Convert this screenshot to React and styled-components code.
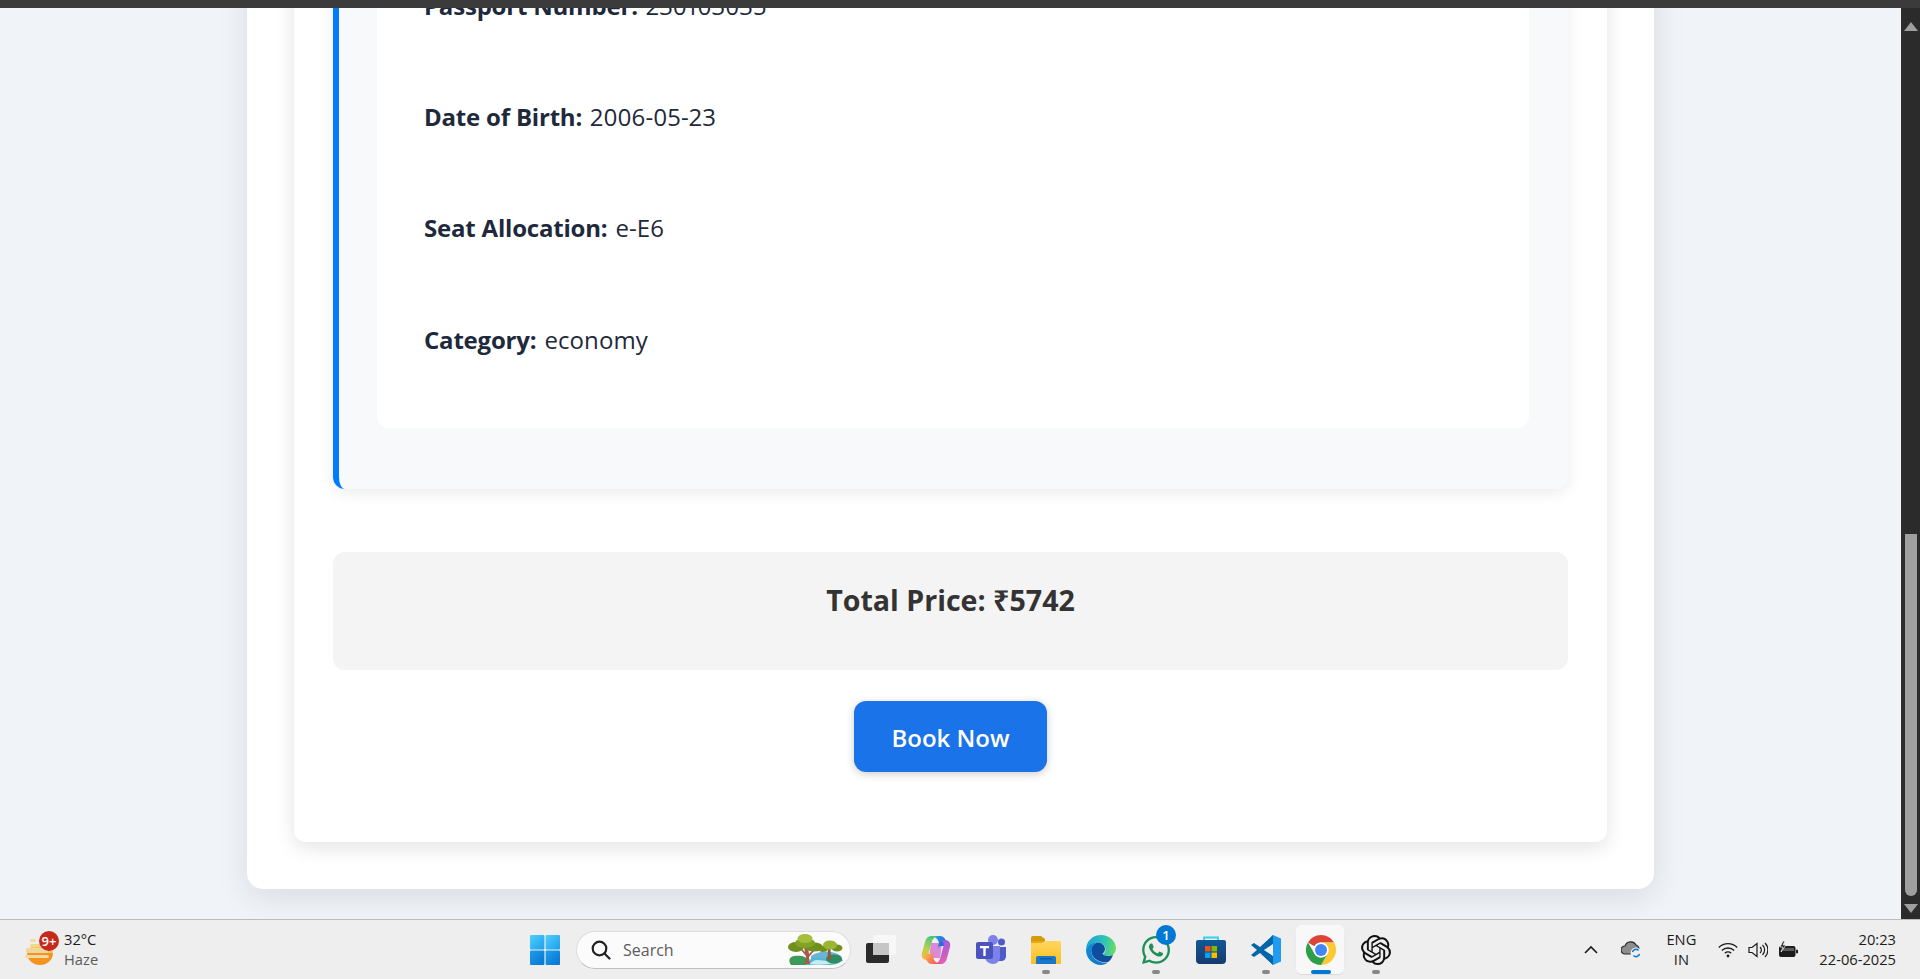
import React from "react";
import styled, { createGlobalStyle } from "styled-components";
import { SiOpenai } from "react-icons/si";
import { FaWhatsapp } from "react-icons/fa";

const GlobalStyle = createGlobalStyle`
  html, body {
    margin: 0;
    padding: 0;
    overflow: hidden;
    font-family: "Open Sans", "Noto Sans", sans-serif;
  }
`;

const Screen = styled.div`
  width: 1920px;
  height: 979px;
  display: grid;
  grid-template-rows: 8px 911px 60px;
  background: #f0f4f8;
`;

const TopStrip = styled.div`
  background: #3b3b3b;
`;

const Middle = styled.div`
  display: grid;
  grid-template-columns: 1fr 19px;
  min-height: 0;
`;

/* scrolled to the bottom, so content hangs from the bottom edge */
const Viewport = styled.main`
  display: flex;
  flex-direction: column;
  justify-content: flex-end;
  align-items: center;
  overflow: hidden;
  padding-bottom: 30px;
`;

const OuterCard = styled.div`
  width: 1407px;
  box-sizing: border-box;
  flex-shrink: 0;
  background: #fff;
  border-radius: 16px;
  padding: 0 47px 47px;
  box-shadow: 0 8px 32px rgba(0, 0, 0, 0.1);
`;

const BookingCard = styled.div`
  background: #fff;
  border-radius: 12px;
  padding: 0 39px 70px;
  box-shadow: 0 6px 20px rgba(0, 0, 0, 0.11);
`;

const PassengerCard = styled.section`
  background: #f8f9fb;
  border-left: 6px solid #007bff;
  border-radius: 12px;
  padding: 0 39px 61px 38px;
  box-shadow: 0 4px 15px rgba(0, 0, 0, 0.08);
`;

const Details = styled.div`
  background: #fff;
  border-radius: 12px;
  padding: 0 47px 34px;
`;

const Row = styled.p`
  margin: 0;
  height: 111px;
  padding-top: 1px;
  display: flex;
  align-items: center;
  gap: 8px;
  font-size: 24px;
  letter-spacing: 0.1px;
  font-variant-numeric: proportional-nums;
  color: #1e293b;
  border-bottom: 1px solid #fefefe;
  box-sizing: border-box;
  &:last-child {
    border-bottom: 0;
  }
  strong {
    font-weight: 700;
    letter-spacing: -0.2px;
  }
`;

const TotalBox = styled.div`
  margin-top: 63px;
  height: 118px;
  box-sizing: border-box;
  padding-top: 28px;
  background: #f4f4f4;
  border-radius: 12px;
  text-align: center;
  font-size: 28.6px;
  line-height: 40px;
  font-weight: 700;
  color: #333;
`;

const BookRow = styled.div`
  display: flex;
  justify-content: center;
  margin-top: 31px;
`;

const BookButton = styled.button`
  width: 193px;
  height: 71px;
  padding: 2px 0 0;
  border: 0;
  border-radius: 12px;
  background: #1a73e8;
  color: #fff;
  font-family: inherit;
  font-size: 24px;
  font-weight: 600;
  box-shadow: 0 2px 8px rgba(0, 0, 0, 0.2);
`;

const ScrollTrack = styled.div`
  background: #2b2b2b;
  display: flex;
  flex-direction: column;
  align-items: center;
  justify-content: space-between;
  padding: 14px 0 6px;
`;

const Arrow = styled.div`
  width: 0;
  height: 0;
  border-left: 7px solid transparent;
  border-right: 7px solid transparent;
  ${(p) => (p.$down ? "border-top: 9px solid #9f9f9f;" : "border-bottom: 9px solid #9f9f9f;")}
`;

const Thumb = styled.div`
  width: 12px;
  height: 362px;
  margin-top: auto;
  margin-bottom: 8px;
  border-radius: 0 0 6px 6px;
  background: #9f9f9f;
`;

const Taskbar = styled.footer`
  display: grid;
  grid-template-columns: 517px 887px 1fr;
  align-items: center;
  background: #eeeeee;
  border-top: 1px solid #bcbcbc;
  box-sizing: border-box;
`;

const Weather = styled.div`
  display: flex;
  align-items: center;
  gap: 9px;
  padding-left: 25px;
`;

const WeatherIcon = styled.div`
  position: relative;
  width: 30px;
  height: 32px;
`;

const CountBadge = styled.span`
  position: absolute;
  display: flex;
  align-items: center;
  justify-content: center;
  border-radius: 50%;
  color: #fff;
  background: ${(p) => p.$bg};
  width: ${(p) => p.$size}px;
  height: ${(p) => p.$size}px;
  top: ${(p) => p.$top}px;
  right: ${(p) => p.$right}px;
  font-size: 13px;
  font-weight: 600;
`;

const TwoLines = styled.div`
  display: flex;
  flex-direction: column;
  gap: 3px;
  font-size: 14.7px;
  line-height: 17px;
  color: #1c1c1c;
`;

const Muted = styled.span`
  color: #5c5c5c;
`;

const Center = styled.div`
  display: flex;
  align-items: center;
`;

const Slot = styled.div`
  position: relative;
  width: 55px;
  height: 59px;
  display: flex;
  align-items: center;
  justify-content: center;
  flex-shrink: 0;
  &::before {
    content: "";
    display: ${(p) => (p.$active ? "block" : "none")};
    position: absolute;
    left: 3px;
    right: 4px;
    top: 5px;
    bottom: 5px;
    background: #f8f8f8;
    border-radius: 5px;
    box-shadow: 0 1px 1px rgba(0, 0, 0, 0.08);
  }
  svg {
    position: relative;
  }
`;

const Running = styled.span`
  position: absolute;
  left: 50%;
  bottom: 5px;
  transform: translateX(-50%);
  height: 4px;
  border-radius: 2px;
  width: ${(p) => (p.$active ? 20 : 8)}px;
  background: ${(p) => (p.$active ? "#0078d4" : "#888")};
`;

const SearchBox = styled.div`
  width: 275px;
  height: 38px;
  margin: 0 2px 0 4px;
  box-sizing: border-box;
  padding: 0 7px 0 14px;
  flex-shrink: 0;
  display: flex;
  align-items: center;
  gap: 12px;
  background: #fbfbfb;
  border: 1px solid #dcdcdc;
  border-bottom-color: #bfbfbf;
  border-radius: 19px;
  font-size: 16px;
  color: #5c5c5c;
`;

const SearchLabel = styled.span`
  flex: 1;
`;

const Tray = styled.div`
  display: flex;
  align-items: center;
  justify-content: flex-end;
  padding-right: 24px;
`;

const TrayIcon = styled.div`
  display: flex;
  margin-left: ${(p) => p.$gap || 0}px;
`;

const Lang = styled(TwoLines)`
  margin-left: 24px;
  text-align: center;
`;

const Clock = styled(TwoLines)`
  margin-left: 21px;
  text-align: right;
`;

const WeatherGlyph = () => (
  <svg width="30" height="32" viewBox="0 0 30 32">
    <path d="M2 19h26a13 12 0 0 1-26 0z" fill="#f5931e" />
    <path d="M6 13h20a12 12 0 0 1 2 6H3a12 12 0 0 1 3-6z" fill="#f9c468" />
    <rect x="5" y="5" width="6" height="3" rx="1.5" fill="#f5dc94" />
    <rect x="5" y="10" width="16" height="3" rx="1.5" fill="#f3d78d" />
    <rect x="1" y="14" width="22" height="5" rx="2" fill="#eed79b" />
    <rect x="0" y="21" width="24" height="3" rx="1.5" fill="#efd9a4" />
  </svg>
);

const WindowsLogo = () => (
  <svg width="30" height="30" viewBox="0 0 30 30">
    <defs>
      <linearGradient id="winA" x1="0" y1="0" x2="1" y2="1">
        <stop offset="0" stopColor="#4fd0fb" />
        <stop offset="1" stopColor="#1e9eec" />
      </linearGradient>
      <linearGradient id="winB" x1="0" y1="0" x2="1" y2="1">
        <stop offset="0" stopColor="#1d9fec" />
        <stop offset="1" stopColor="#0674d2" />
      </linearGradient>
    </defs>
    <rect x="0" y="0" width="14.4" height="14.4" rx="1" fill="url(#winA)" />
    <rect x="15.6" y="0" width="14.4" height="14.4" rx="1" fill="url(#winA)" />
    <rect x="0" y="15.6" width="14.4" height="14.4" rx="1" fill="url(#winB)" />
    <rect x="15.6" y="15.6" width="14.4" height="14.4" rx="1" fill="url(#winB)" />
  </svg>
);

const SearchGlyph = () => (
  <svg width="20" height="20" viewBox="0 0 20 20" fill="none" stroke="#222" strokeWidth="2.2" strokeLinecap="round">
    <circle cx="8.5" cy="8.5" r="6.8" />
    <path d="M13.5 13.5 18.5 18.5" />
  </svg>
);

const Trees = () => (
  <svg width="56" height="32" viewBox="0 0 56 32">
    <path d="M24 22c8-6 22-6 30 0l2 5-8 3H24z" fill="#6bb4d8" />
    <path d="M4 31c-3-4-2-8 3-9 6-1 12 0 14 4 1 2 0 4-2 5z" fill="#3f9a5a" />
    <path d="M18 31c6-2 3-6 8-7 8-1 20 1 27 3-2 3-6 4-12 4z" fill="#55b6cf" />
    <path d="M22 30c4-2 3-3 7-4 6 0 12 1 17 3-6 2-16 2-24 1z" fill="#c6eef2" />
    <ellipse cx="47" cy="25" rx="8" ry="4.500" fill="#2f8d62" />
    <path d="M17 13h4l1 7 4-4 1 1-5 6 1 7h-5l1-8-5-6 1-1 3 3z" fill="#a85b45" />
    <path d="M41 15h2.500l.5 11h-3.500z" fill="#8f5a40" />
    <ellipse cx="9" cy="13" rx="8" ry="5" fill="#6f8f1e" />
    <ellipse cx="27" cy="13" rx="9" ry="4.500" fill="#6f8f1e" />
    <ellipse cx="18" cy="9" rx="10" ry="5" fill="#84a326" />
    <ellipse cx="18" cy="4.500" rx="7.500" ry="4.500" fill="#a6bf3a" />
    <ellipse cx="36" cy="15" rx="5" ry="3" fill="#6f8f1e" />
    <ellipse cx="50" cy="14" rx="5.500" ry="3.500" fill="#6f8f1e" />
    <ellipse cx="43" cy="11" rx="7" ry="4.500" fill="#9ab733" />
  </svg>
);

const TaskView = () => (
  <svg width="30" height="30" viewBox="0 0 30 30">
    <rect x="7" y="0" width="23" height="20" rx="2" fill="#f7f7f7" />
    <rect x="0" y="8" width="23" height="20" rx="2" fill="#2b2b2b" />
    <rect x="7" y="8" width="16" height="12" fill="#c6c6c6" />
  </svg>
);

const Copilot = () => (
  <svg width="30" height="30" viewBox="0 0 30 30">
    <defs>
      <linearGradient id="copA" x1="0" y1="0" x2="1" y2="0.6">
        <stop offset="0" stopColor="#27b4e8" />
        <stop offset="1" stopColor="#2a55d8" />
      </linearGradient>
      <linearGradient id="copB" x1="0.7" y1="0" x2="0.3" y2="1">
        <stop offset="0" stopColor="#3cc28a" />
        <stop offset="0.6" stopColor="#b8d24a" />
        <stop offset="1" stopColor="#f8b63a" />
      </linearGradient>
      <linearGradient id="copC" x1="0.3" y1="0" x2="0.7" y2="1">
        <stop offset="0" stopColor="#8a5fe8" />
        <stop offset="1" stopColor="#ef5fa8" />
      </linearGradient>
      <linearGradient id="copD" x1="0" y1="0.4" x2="1" y2="1">
        <stop offset="0" stopColor="#fbb04a" />
        <stop offset="1" stopColor="#ee4062" />
      </linearGradient>
    </defs>
    <path d="M10 8h11l-2 15H8z" fill="#d98ad8" />
    <path d="M10 1h9c3 0 5 2 6 5l1.500 5H20c-2 0-3 1-3.500 3L18 8c-1-4-3-6-8-7z" fill="url(#copA)" />
    <path d="M10 1h7c-4 1-5.500 3-6.500 7l-3 11c-.5 3 .5 5 2.500 6H6c-4 0-6-3-5-7L4 7c1-4 3-6 6-6z" fill="url(#copB)" />
    <path d="M20 29h-7c4-1 5.500-3 6.500-7l3-11c.5-3-.5-5-2.500-6h4c4 0 6 3 5 7l-3 11c-1 4-3 6-6 6z" fill="url(#copC)" />
    <path d="M20 29h-9c-3 0-5-2-6-5l-1.500-5H10c2 0 3-1 3.500-3L12 22c1 4 3 6 8 7z" fill="url(#copD)" />
  </svg>
);

const Teams = () => (
  <svg width="30" height="30" viewBox="0 0 30 30">
    <circle cx="17" cy="5" r="5" fill="#7b83eb" />
    <circle cx="25.500" cy="7" r="3.500" fill="#5059c9" />
    <path d="M21 12h9v9c0 3-2 5-5 5h-3z" fill="#5059c9" />
    <path d="M9 11h15v11c0 4-3 7-7 7s-8-3-8-7z" fill="#7b83eb" />
    <rect x="0" y="7" width="17" height="17" rx="2" fill="#4b53bc" />
    <path d="M4 11h9v2.200h-3.300V21H7.300v-7.800H4z" fill="#fff" />
  </svg>
);

const Folder = () => (
  <svg width="30" height="28" viewBox="0 0 30 28">
    <defs>
      <linearGradient id="fold" x1="0" y1="0" x2="0" y2="1">
        <stop offset="0" stopColor="#ffd75e" />
        <stop offset="1" stopColor="#fbbf22" />
      </linearGradient>
    </defs>
    <path d="M0 2a2 2 0 0 1 2-2h8l4 3h0v24H0z" fill="#d39b0e" />
    <path d="M0 5h30v23H0z" fill="url(#fold)" />
    <path d="M0 5h14l-3 2H0z" fill="#e9aa10" />
    <path d="M5 28v-6a2 2 0 0 1 2-2h16a2 2 0 0 1 2 2v6z" fill="#1a78c8" />
    <rect x="9" y="22" width="12" height="1.500" fill="#0f5fa8" />
  </svg>
);

const Edge = () => (
  <svg width="30" height="30" viewBox="0 0 30 30">
    <defs>
      <linearGradient id="edgeA" x1="0" y1="0.5" x2="1" y2="0.6">
        <stop offset="0" stopColor="#1ba3dc" />
        <stop offset="0.6" stopColor="#2fc4b2" />
        <stop offset="1" stopColor="#6fdc62" />
      </linearGradient>
      <linearGradient id="edgeB" x1="0" y1="0" x2="1" y2="1">
        <stop offset="0" stopColor="#0f8fd8" />
        <stop offset="1" stopColor="#1273c4" />
      </linearGradient>
    </defs>
    <path d="M0 15C0 6 7 0 15 0c9 0 15 6.500 15 13.500 0 4.500-3.500 7.500-8 7.500-3 0-5-1-5-2 1.500-1 2.500-2.500 2.500-4.500C19.500 10 15.500 7 11.500 7.500 5.500 8 1 11 0 15z" fill="url(#edgeA)" />
    <path d="M0 15C1 10.500 6 7.500 11 7.500c-4 1.500-6.500 5.500-5.500 10.500 1 6 8 11 16.500 9.500-2 1.500-4.500 2.500-7 2.500C6.500 30 0 23 0 15z" fill="url(#edgeB)" />
    <path d="M11 7.500c4-.5 8 2.500 8 6.500 0 2-1 3.500-2.500 4.500 0 1.500 2.500 2.500 5.500 2.500 2 0 3.500-.5 5-1.500-1 3.500-2.500 6-5 7.500-8.500 1.500-15.500-3.500-16.500-9.500C4.500 13 7 9 11 7.500z" fill="#0b4f9e" />
  </svg>
);

const Store = () => (
  <svg width="30" height="30" viewBox="0 0 30 30">
    <defs>
      <linearGradient id="storeBg" x1="0" y1="0" x2="0" y2="1">
        <stop offset="0" stopColor="#0f5a96" />
        <stop offset="1" stopColor="#173a6e" />
      </linearGradient>
    </defs>
    <path d="M8 6V2.500h14V6" fill="none" stroke="#31d0f2" strokeWidth="1.800" />
    <path d="M0 7a2 2 0 0 1 2-2h26a2 2 0 0 1 2 2v18a4 4 0 0 1-4 4H4a4 4 0 0 1-4-4z" fill="url(#storeBg)" />
    <rect x="9" y="11" width="5.500" height="5.500" fill="#f25022" />
    <rect x="15.500" y="11" width="5.500" height="5.500" fill="#7fba00" />
    <rect x="9" y="17.500" width="5.500" height="5.500" fill="#00a4ef" />
    <rect x="15.500" y="17.500" width="5.500" height="5.500" fill="#ffb900" />
  </svg>
);

const VsCode = () => (
  <svg width="30" height="30" viewBox="0 0 30 30">
    <path d="M22 0 30 3.500v23L22 30 8 16.500z" fill="#1f9cf0" />
    <path d="M22 0 9 12 3 8 0 10l6 5-6 5 3 2 6-4 13 12V21l-9-6 9-6z" fill="#0065a9" />
    <path d="M22 9v12l-9-6z" fill="#eeeeee" />
  </svg>
);

const Chrome = () => (
  <svg width="30" height="30" viewBox="0 0 30 30">
    <path d="M15 0A15 15 0 0 1 28 7.500H15A7.500 7.500 0 0 0 8.500 11.250L2 7.500A15 15 0 0 1 15 0z" fill="#db4437" />
    <path d="M28 7.500A15 15 0 0 1 15 30L21.500 18.750A7.500 7.500 0 0 0 15 7.500z" fill="#fcc934" />
    <path d="M15 30A15 15 0 0 1 2 7.500L8.500 18.750A7.500 7.500 0 0 0 21.500 18.750z" fill="#2c9f48" />
    <circle cx="15" cy="15" r="7.500" fill="#fff" />
    <circle cx="15" cy="15" r="6" fill="#4285f4" />
  </svg>
);

const Chevron = () => (
  <svg width="14" height="9" viewBox="0 0 14 9" fill="none" stroke="#1c1c1c" strokeWidth="1.600">
    <path d="M1 8 7 2l6 6" />
  </svg>
);

const CloudSync = () => (
  <svg width="21" height="19" viewBox="0 0 21 19">
    <path d="M4 14a4 4 0 0 1 0-8 6 6 0 0 1 11-1 4.500 4.500 0 0 1 3 4v3l-6 2z" fill="#8d8d8d" stroke="#2b2b2b" strokeWidth="1.200" />
    <circle cx="15" cy="13" r="5.500" fill="#eeeeee" />
    <path d="M11.500 12a3.500 3.500 0 0 1 6-1.500M18.500 14a3.500 3.500 0 0 1-6 1.500" fill="none" stroke="#0a78d4" strokeWidth="1.500" />
  </svg>
);

const Wifi = () => (
  <svg width="20" height="16" viewBox="0 0 20 16" fill="none" stroke="#1c1c1c" strokeWidth="1.300">
    <path d="M.8 5.500a13 13 0 0 1 18.400 0M3.800 8.500a9 9 0 0 1 12.400 0M6.800 11.200a4.700 4.700 0 0 1 6.400 0" />
    <circle cx="10" cy="14" r="1.400" fill="#1c1c1c" stroke="none" />
  </svg>
);

const Speaker = () => (
  <svg width="20" height="16" viewBox="0 0 20 16" fill="none" stroke="#1c1c1c" strokeWidth="1.200">
    <path d="M1 5.500h3L9 1.500v13l-5-4H1z" />
    <path d="M12 5a4 4 0 0 1 0 6M14.500 3a7 7 0 0 1 0 10M17 1a10 10 0 0 1 0 14" />
  </svg>
);

const Battery = () => (
  <svg width="20" height="17" viewBox="0 0 20 17">
    <rect x="1" y="5" width="16.500" height="11" rx="2" fill="#1c1c1c" />
    <rect x="18" y="8.500" width="2" height="4" rx="1" fill="#1c1c1c" />
    <rect x="5" y="7" width="11" height="3" fill="#5a5a5a" />
    <path d="M5 0 2 6h3l-2 5 5-7H5l2-4z" fill="#1c1c1c" stroke="#eeeeee" strokeWidth="0.800" />
  </svg>
);

function App() {
  return (
    <Screen>
      <GlobalStyle />
      <TopStrip />
      <Middle>
        <Viewport>
          <OuterCard>
            <BookingCard>
              <PassengerCard>
                <Details>
                  <Row><strong>Passport Number:</strong> 230103035</Row>
                  <Row><strong>Date of Birth:</strong> 2006-05-23</Row>
                  <Row><strong>Seat Allocation:</strong> e-E6</Row>
                  <Row><strong>Category:</strong> economy</Row>
                </Details>
              </PassengerCard>
              <TotalBox>Total Price: ₹5742</TotalBox>
              <BookRow>
                <BookButton>Book Now</BookButton>
              </BookRow>
            </BookingCard>
          </OuterCard>
        </Viewport>
        <ScrollTrack>
          <Arrow />
          <Thumb />
          <Arrow $down />
        </ScrollTrack>
      </Middle>
      <Taskbar>
        <Weather>
          <WeatherIcon>
            <WeatherGlyph />
            <CountBadge $bg="#c42b1c" $size={20} $top={-3} $right={-4}>9+</CountBadge>
          </WeatherIcon>
          <TwoLines>
            <span>32°C</span>
            <Muted>Haze</Muted>
          </TwoLines>
        </Weather>
        <Center>
          <Slot><WindowsLogo /></Slot>
          <SearchBox>
            <SearchGlyph />
            <SearchLabel>Search</SearchLabel>
            <Trees />
          </SearchBox>
          <Slot><TaskView /></Slot>
          <Slot><Copilot /></Slot>
          <Slot><Teams /></Slot>
          <Slot><Folder /><Running /></Slot>
          <Slot><Edge /></Slot>
          <Slot>
            <FaWhatsapp size={32} color="#1f8f57" />
            <CountBadge $bg="#0078d4" $size={20} $top={5} $right={7}>1</CountBadge>
            <Running />
          </Slot>
          <Slot><Store /></Slot>
          <Slot><VsCode /><Running /></Slot>
          <Slot $active><Chrome /><Running $active /></Slot>
          <Slot><SiOpenai size={30} color="#111" /><Running /></Slot>
        </Center>
        <Tray>
          <TrayIcon><Chevron /></TrayIcon>
          <TrayIcon $gap={23}><CloudSync /></TrayIcon>
          <Lang>
            <span>ENG</span>
            <span>IN</span>
          </Lang>
          <TrayIcon $gap={22}><Wifi /></TrayIcon>
          <TrayIcon $gap={10}><Speaker /></TrayIcon>
          <TrayIcon $gap={10}><Battery /></TrayIcon>
          <Clock>
            <span>20:23</span>
            <span>22-06-2025</span>
          </Clock>
        </Tray>
      </Taskbar>
    </Screen>
  );
}

export default App;
